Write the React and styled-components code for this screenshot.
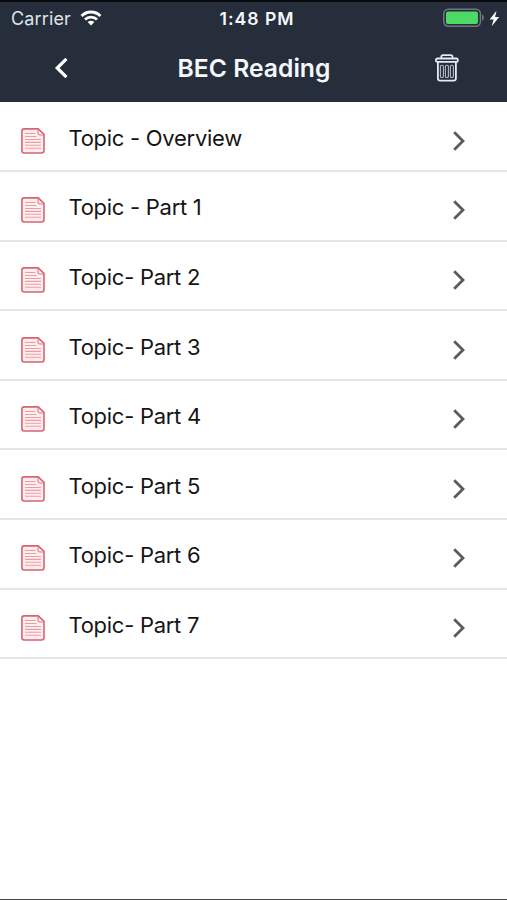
import React from 'react';
import styled, { createGlobalStyle } from 'styled-components';

const topics = [
  'Topic - Overview',
  'Topic - Part 1',
  'Topic- Part 2',
  'Topic- Part 3',
  'Topic- Part 4',
  'Topic- Part 5',
  'Topic- Part 6',
  'Topic- Part 7',
];

const WifiIcon = () => (
  <svg width="22" height="17" viewBox="0 0 24 18" fill="none" stroke="#fff" strokeWidth="3.1">
    <path d="M1.7 6.3C7.4 .5 16.6 .5 22.3 6.3" />
    <path d="M5.4 10.2C9.1 6.5 14.9 6.5 18.6 10.2" />
    <path d="M8.4 12.9C10.5 11 13.5 11 15.6 12.9L12 16.6Z" fill="#fff" stroke="none" />
  </svg>
);

const BatteryIcon = () => (
  <svg width="42" height="20" viewBox="0 0 42 20">
    <rect x=".8" y="1.2" width="36.6" height="17" rx="4.5" fill="none" stroke="#70767f" strokeWidth="1.5" />
    <rect x="3" y="3.5" width="32" height="12.5" rx="2" fill="#4cd964" />
    <path d="M39 6.6C41.5 7.5 41.5 12 39 12.8Z" fill="#70767f" />
  </svg>
);

const BoltIcon = () => (
  <svg width="11" height="17" viewBox="0 0 11 17">
    <path d="M7.5 .7L.6 9.4H4.6L2.7 16.2L10.2 7H6.1Z" fill="#fff" />
  </svg>
);

const BackIcon = () => (
  <svg width="16" height="24" viewBox="0 0 16 24" fill="none">
    <path d="M12.4 2.8L3.2 12L12.4 21.2" stroke="#fff" strokeWidth="3.2" />
  </svg>
);

const TrashIcon = () => (
  <svg width="24" height="28" viewBox="0 0 24 28" fill="none" stroke="#e6eaf1" strokeWidth="1.8">
    <path d="M6.3 4.3V2.8Q6.3 1.2 8 1.2H15.8Q17.5 1.2 17.5 2.8V4.3" />
    <rect x=".9" y="4.5" width="22" height="3.4" rx="1.5" />
    <path d="M2.9 8V24.2Q2.9 26.6 5.3 26.6H18.5Q20.9 26.6 20.9 24.2V8" />
    <g stroke="#b4bac4" strokeWidth="1.1">
      <rect x="5.4" y="11.2" width="3" height="12.3" rx="1.3" />
      <rect x="10.4" y="11.2" width="3" height="12.3" rx="1.3" />
      <rect x="15.4" y="11.2" width="3" height="12.3" rx="1.3" />
    </g>
  </svg>
);

const FileIcon = () => (
  <svg width="24" height="26" viewBox="0 0 24 26" fill="none">
    <path
      d="M3.2 .9H17.2L23 6.4V22.6Q23 25 20.6 25H3.2Q.9 25 .9 22.6V3.2Q.9 .9 3.2 .9Z"
      fill="#ffeef0"
      stroke="#d96370"
      strokeWidth="1.6"
    />
    <path d="M17 1.2V5.2Q17 7 18.8 7H22.8" stroke="#df7882" strokeWidth="1.1" />
    <path
      d="M4 5.5H14.5M4 8.5H15.5M4 11.5H20M4 14.4H20M4 17.3H20M4 20.2H20"
      stroke="#eb9da4"
      strokeWidth="1.1"
    />
  </svg>
);

const NextIcon = () => (
  <svg width="14" height="22" viewBox="0 0 14 22" fill="none">
    <path d="M2.2 2.2L11 11L2.2 19.8" stroke="#5b5b5b" strokeWidth="2.8" />
  </svg>
);

const App = () => {
  return (
    <>
      <GlobalStyle />
      <Screen>
        <Header>
          <StatusBar>
            <Carrier>
              <span>Carrier</span>
              <WifiIcon />
            </Carrier>
            <Time>1:48 PM</Time>
            <Power>
              <BatteryIcon />
              <BoltIcon />
            </Power>
          </StatusBar>
          <NavBar>
            <NavButton aria-label="Back" $align="flex-start">
              <BackIcon />
            </NavButton>
            <Title>BEC Reading</Title>
            <NavButton aria-label="Delete" $align="flex-end">
              <TrashIcon />
            </NavButton>
          </NavBar>
        </Header>
        <TopicList>
          {topics.map((topic) => (
            <TopicRow key={topic}>
              <FileIcon />
              <TopicName>{topic}</TopicName>
              <NextIcon />
            </TopicRow>
          ))}
        </TopicList>
      </Screen>
    </>
  );
};

export default App;

const GlobalStyle = createGlobalStyle`
  * {
    box-sizing: border-box;
  }

  body {
    margin: 0;
    background: #fff;
    font-family: Inter, 'Liberation Sans', sans-serif;
  }

  svg {
    display: block;
    flex-shrink: 0;
  }
`;

const Screen = styled.div`
  display: flex;
  flex-direction: column;
  height: 900px;
  background: #fff;
  border-bottom: 1px solid #454547;
  overflow: hidden;
`;

const Header = styled.header`
  height: 102px;
  flex-shrink: 0;
  background: #252e3a;
  border-top: 2px solid #07090d;
  color: #f4f7fc;
`;

const StatusBar = styled.div`
  display: grid;
  grid-template-columns: 1fr auto 1fr;
  align-items: center;
  height: 32px;
  padding: 0 7px 0 11px;
`;

const Carrier = styled.div`
  display: flex;
  align-items: center;
  gap: 9px;
  font-size: 18px;
  line-height: 22px;
  letter-spacing: 0.15px;
  color: #dfe4eb;

  span {
    padding-top: 1px;
  }
`;

const Time = styled.div`
  padding: 1px 0 0 3px;
  font-size: 17.6px;
  font-weight: 600;
  line-height: 22px;
  letter-spacing: 1px;
`;

const Power = styled.div`
  display: flex;
  justify-content: flex-end;
  align-items: center;
  gap: 4px;
`;

const NavBar = styled.div`
  display: grid;
  grid-template-columns: 1fr auto 1fr;
  align-items: center;
  height: 67px;
  padding: 0 48px 0 54px;
`;

const NavButton = styled.button`
  display: flex;
  justify-content: ${props => props.$align};
  padding: 0;
  border: 0;
  background: none;
`;

const Title = styled.h1`
  margin: 1px 5px 0 0;
  font-size: 24.7px;
  font-weight: 600;
  line-height: 30px;
`;

const TopicList = styled.ul`
  margin: 0;
  padding: 0.6px 0 0;
  list-style: none;
`;

const TopicRow = styled.li`
  display: flex;
  align-items: center;
  height: 69.57px;
  padding: 9px 41px 0 21px;
  border-bottom: 2px solid #e6e6e6;
`;

const TopicName = styled.span`
  flex: 1;
  margin: -6px 0 0 23.5px;
  font-size: 22px;
  line-height: 28px;
  letter-spacing: -0.28px;
  color: #151515;
`;
